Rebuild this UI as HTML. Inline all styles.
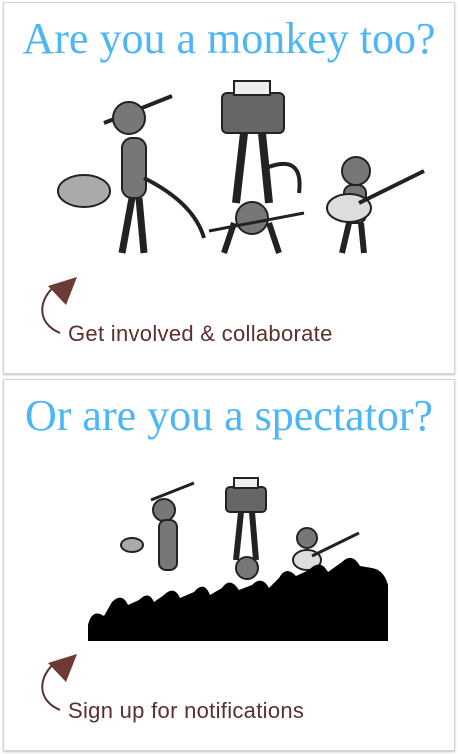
<!DOCTYPE html>
<html><head><meta charset="utf-8"><style>
body{margin:0;width:458px;height:754px;background:#fff;overflow:hidden;position:relative;font-family:"Liberation Serif",serif}
.p{position:absolute;left:3px;width:450px;background:#fff;border:1px solid #d4d4d4;box-shadow:0 1px 2px rgba(0,0,0,.25)}
.t{position:absolute;left:0;width:100%;text-align:center;color:#4cb6f7;font-size:44px;line-height:50px;letter-spacing:0}
.h{position:absolute;color:#5a2f2c;font-family:"Liberation Sans",sans-serif;font-size:22px;letter-spacing:.3px}
svg{position:absolute;left:0;top:0}
</style></head><body>
<div class="p" style="top:2px;height:370px">
<div class="t" style="top:11px">Are you a monkey too?</div>
<svg width="450" height="370">
<g fill="#777" stroke="#222" stroke-width="2">
<ellipse cx="80" cy="188" rx="26" ry="16" fill="#aaa"/>
<line x1="100" y1="120" x2="168" y2="93" stroke-width="4"/>
<circle cx="125" cy="115" r="16"/>
<rect x="118" y="135" width="24" height="60" rx="10"/>
<path d="M128 195 L118 250 M135 195 L140 250" fill="none" stroke-width="7"/>
<path d="M140 175 Q190 200 200 235" fill="none" stroke-width="4"/>
<rect x="218" y="90" width="62" height="40" rx="5" fill="#666"/>
<rect x="230" y="78" width="36" height="14" fill="#eee"/>
<path d="M240 130 L232 200 M258 130 L265 200" fill="none" stroke-width="8"/>
<circle cx="248" cy="215" r="16"/>
<path d="M230 220 L220 250 M265 220 L275 250" fill="none" stroke-width="6"/>
<line x1="205" y1="228" x2="300" y2="210" stroke-width="3"/>
<path d="M262 165 Q300 150 295 190" fill="none" stroke-width="4"/>
<circle cx="352" cy="168" r="14"/>
<rect x="340" y="182" width="22" height="38" rx="8"/>
<path d="M345 220 L338 250 M357 220 L360 250" fill="none" stroke-width="6"/>
<ellipse cx="345" cy="205" rx="22" ry="14" fill="#ddd"/>
<line x1="355" y1="200" x2="420" y2="168" stroke-width="4"/>
</g>
<path d="M56 330 C32 320 34 296 52 282" fill="none" stroke="#5a2f2c" stroke-width="2"/>
<path d="M44 283 L73 274 L62 302 Z" fill="#6e3a35"/>
</svg>
<div class="h" style="left:64px;top:318px">Get involved &amp; collaborate</div>
</div>
<div class="p" style="top:379px;height:370px">
<div class="t" style="top:11px">Or are you a spectator?</div>
<svg width="450" height="370">
<g fill="#777" stroke="#222" stroke-width="2">
<ellipse cx="128" cy="165" rx="11" ry="7" fill="#aaa"/>
<line x1="147" y1="120" x2="190" y2="103" stroke-width="3"/>
<circle cx="160" cy="130" r="11"/>
<rect x="155" y="140" width="18" height="50" rx="7"/>
<rect x="222" y="107" width="40" height="25" rx="4" fill="#666"/>
<rect x="230" y="98" width="24" height="10" fill="#eee"/>
<path d="M237 132 L232 180 M248 132 L252 180" fill="none" stroke-width="6"/>
<circle cx="243" cy="188" r="11"/>
<circle cx="303" cy="158" r="10"/>
<ellipse cx="303" cy="180" rx="14" ry="10" fill="#ddd"/>
<line x1="308" y1="176" x2="355" y2="153" stroke-width="3"/>
</g>
<path fill="#000" d="M84 261 L84 245 Q88 228 100 236 L108 222 Q118 212 124 225 L135 220 Q145 210 150 222 L160 215 Q170 205 176 218 L190 212 Q200 200 206 215 L218 208 Q226 196 235 210 L248 205 Q258 195 265 208 L275 198 Q282 185 292 196 L305 190 Q316 178 324 192 L338 182 Q348 172 356 186 L368 188 Q380 190 384 205 L384 261 Z"/>
<path d="M56 330 C32 320 34 296 52 282" fill="none" stroke="#5a2f2c" stroke-width="2"/>
<path d="M44 283 L73 274 L62 302 Z" fill="#6e3a35"/>
</svg>
<div class="h" style="left:64px;top:318px">Sign up for notifications</div>
</div>
</body></html>
